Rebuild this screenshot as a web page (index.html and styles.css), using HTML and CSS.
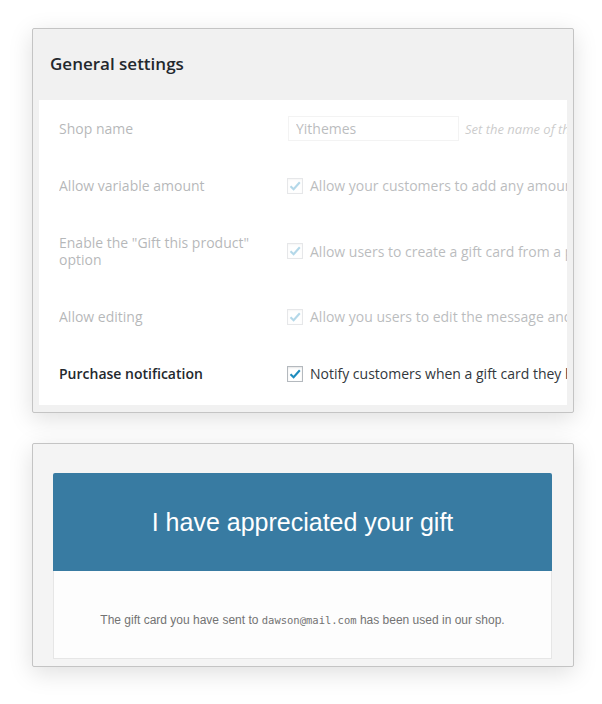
FILE: index.html
```html
<!DOCTYPE html>
<html lang="en">
<head>
<meta charset="UTF-8">
<title>Gift cards settings</title>
<link rel="stylesheet" href="styles.css">
</head>
<body>

<div class="page">
    <section class="panel settings">
        <h2>General settings</h2>
        <div class="settings-body">
            <div class="row disabled">
                <div class="label">Shop name</div>
                <div class="field">
                    <input type="text" value="Yithemes" disabled>
                    <span class="desc">Set the name of the shop that will be shown in the gift card</span>
                </div>
            </div>
            <div class="row disabled">
                <div class="label">Allow variable amount</div>
                <div class="field">
                    <span class="check"><svg width="14" height="14" viewBox="0 0 14 14"><path d="M2.5 7.2 5.6 10.2 11.8 3.2" fill="none" stroke="#1e8cbe" stroke-width="2.1"/></svg></span>
                    Allow your customers to add any amount they want for the gift card
                </div>
            </div>
            <div class="row disabled tall">
                <div class="label">Enable the "Gift this product" option</div>
                <div class="field">
                    <span class="check"><svg width="14" height="14" viewBox="0 0 14 14"><path d="M2.5 7.2 5.6 10.2 11.8 3.2" fill="none" stroke="#1e8cbe" stroke-width="2.1"/></svg></span>
                    Allow users to create a gift card from a product page
                </div>
            </div>
            <div class="row disabled">
                <div class="label">Allow editing</div>
                <div class="field">
                    <span class="check"><svg width="14" height="14" viewBox="0 0 14 14"><path d="M2.5 7.2 5.6 10.2 11.8 3.2" fill="none" stroke="#1e8cbe" stroke-width="2.1"/></svg></span>
                    Allow you users to edit the message and the receiver of the gift card
                </div>
            </div>
            <div class="row">
                <div class="label strong">Purchase notification</div>
                <div class="field">
                    <span class="check"><svg width="14" height="14" viewBox="0 0 14 14"><path d="M2.5 7.2 5.6 10.2 11.8 3.2" fill="none" stroke="#1e8cbe" stroke-width="2.1"/></svg></span>
                    Notify customers when a gift card they have purchased is used
                </div>
            </div>
        </div>
    </section>

    <section class="panel email">
        <div class="email-wrap">
            <div class="email-header">
                <h1>I have appreciated your gift</h1>
            </div>
            <div class="email-body">
                <p>The gift card you have sent to <code>dawson@mail.com</code> has been used in our shop.</p>
            </div>
        </div>
    </section>
</div>

</body>
</html>
```

FILE: styles.css
```css
body {
    margin: 0;
    background: #fff;
    font-family: "Open Sans", "Liberation Sans", sans-serif;
}
.page {
    padding: 28px 0 40px 32px;
}
.panel {
    width: 542px;
    box-sizing: border-box;
    border: 1px solid #c4c4c4;
    border-radius: 2px;
    box-shadow: 0 6px 24px rgba(0, 0, 0, 0.13);
}

/* settings panel */
.settings {
    background: #f1f1f1;
    padding: 0 6px 7px 6px;
}
.settings h2 {
    margin: 0;
    height: 69px;
    padding-bottom: 2px;
    display: flex;
    align-items: center;
    padding-left: 11px;
    font-size: 17px;
    font-weight: 600;
    color: #23282d;
}
.settings-body {
    background: #fff;
    overflow: hidden;
    padding-bottom: 3px;
}
.row {
    display: flex;
    align-items: center;
    height: 57px;
    font-size: 14px;
    color: #32373c;
}
.row.tall {
    height: 74px;
}
.row.disabled {
    opacity: 0.33;
}
.label {
    flex: none;
    width: 200px;
    padding: 0 28px 0 20px;
    line-height: 17px;
    color: #23282d;
}
.label.strong {
    font-weight: 600;
}
.field {
    display: flex;
    align-items: center;
    white-space: nowrap;
}
.field input {
    width: 171px;
    height: 25px;
    box-sizing: border-box;
    margin: 0 6px 0 1px;
    padding: 0 7px;
    border: 1px solid #ddd;
    background: #fff;
    font-family: inherit;
    font-size: 14px;
    color: #32373c;
}
.desc {
    font-style: italic;
    font-size: 13px;
    color: #666;
}
.check {
    flex: none;
    width: 16px;
    height: 16px;
    box-sizing: border-box;
    border: 1px solid #b4b9be;
    background: #fff;
    margin-right: 7px;
    display: flex;
    align-items: center;
    justify-content: center;
    box-shadow: inset 0 1px 2px rgba(0, 0, 0, 0.1);
}

/* email panel */
.email {
    margin-top: 30px;
    background: #f4f4f4;
    padding: 29px 21px 7px 20px;
}
.email-wrap {
    font-family: "Liberation Sans", Arial, sans-serif;
}
.email-header {
    background: #387ba2;
    height: 98px;
    border-radius: 2px 2px 0 0;
    display: flex;
    align-items: center;
    justify-content: center;
}
.email-header h1 {
    margin: 0;
    color: #fff;
    font-size: 25px;
    font-weight: normal;
}
.email-body {
    height: 88px;
    box-sizing: border-box;
    background: #fdfdfd;
    border: 1px solid #e6e6e6;
    border-top: none;
    padding-top: 42px;
}
.email-body p {
    margin: 0;
    text-align: center;
    font-size: 12px;
    color: #737373;
}
.email-body code {
    font-family: "DejaVu Sans Mono", "Liberation Mono", monospace;
    font-size: 10.5px;
}
```
